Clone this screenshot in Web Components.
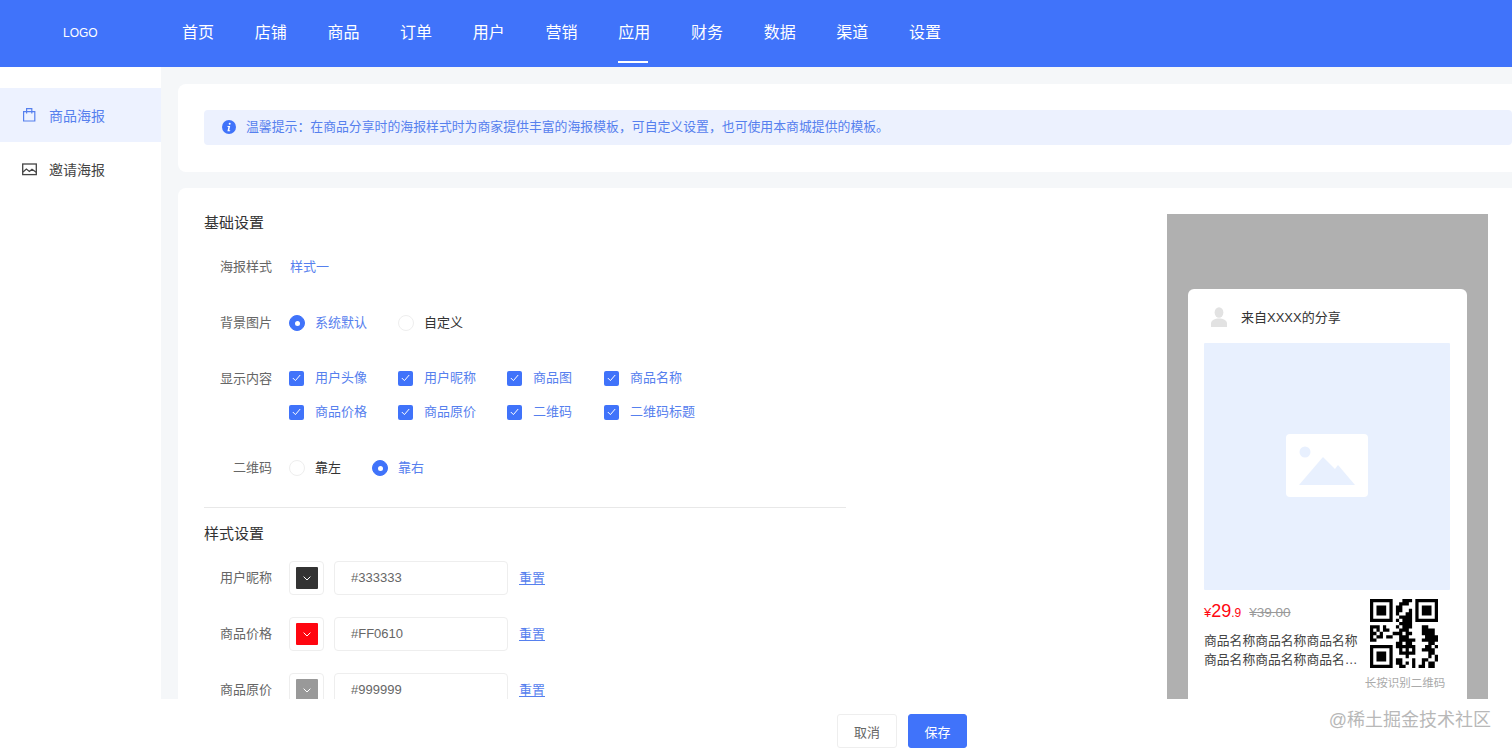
<!DOCTYPE html>
<html lang="zh-CN">
<head>
<meta charset="utf-8">
<title>商品海报</title>
<style>
    html, body {
        margin: 0;
        height: 100%;
        overflow: hidden;
    }
    body {
        font-family: "Liberation Sans", "Noto Sans CJK SC", sans-serif;
        font-size: 13px;
        color: #333;
    }
</style>
</head>
<body>
<poster-app></poster-app>

<script>
const BLUE = '#4073fa';

class AppHeader extends HTMLElement {
    connectedCallback() {
        const items = ['首页', '店铺', '商品', '订单', '用户', '营销', '应用', '财务', '数据', '渠道', '设置'];
        this.attachShadow({ mode: 'open' });
        this.shadowRoot.innerHTML = `
            <style>
                :host {
                    display: flex;
                    flex: none;
                    align-items: stretch;
                    height: 67px;
                    padding-left: 63px;
                    background: ${BLUE};
                    color: #fff;
                }
                .logo {
                    width: 119px;
                    font-size: 12px;
                    line-height: 66px;
                }
                nav {
                    display: flex;
                    gap: 40.7px;
                }
                a {
                    position: relative;
                    font-size: 16px;
                    line-height: 65px;
                    color: #fff;
                    text-decoration: none;
                }
                a.active::after {
                    content: '';
                    position: absolute;
                    left: 0;
                    right: 2px;
                    bottom: 4px;
                    height: 2px;
                    background: #fff;
                }
            </style>
            <div class="logo">LOGO</div>
            <nav>
                ${items.map(t => `<a href="#" class="${t === '应用' ? 'active' : ''}">${t}</a>`).join('')}
            </nav>
        `;
    }
}

class SideItem extends HTMLElement {
    connectedCallback() {
        const active = this.hasAttribute('active');
        const bag = `<svg width="14" height="14" viewBox="0 0 14 14" fill="none" stroke="currentColor" stroke-width="1.2">
                <path d="M1.600 3.600h11.200v9.400H1.600z"/><path d="M4.600 5.600V.7h5.200v4.900"/></svg>`;
        const pic = `<svg width="15" height="13" viewBox="0 0 15 13" fill="none" stroke="currentColor" stroke-width="1.3">
                <rect x=".7" y="1" width="13.600" height="10.600"/><path d="M1 9l3.400-3 3 2.400 2.600-2.200 4.200 3"/></svg>`;
        this.attachShadow({ mode: 'open' });
        this.shadowRoot.innerHTML = `
            <style>
                :host {
                    display: flex;
                    align-items: center;
                    height: 54px;
                    padding-left: 22px;
                    font-size: 14px;
                    color: ${active ? '#5680ee' : '#444'};
                    background: ${active ? '#edf2ff' : 'transparent'};
                }
                .icon {
                    display: flex;
                    width: 27px;
                }
            </style>
            <span class="icon">${this.getAttribute('icon') === 'bag' ? bag : pic}</span>
            <slot></slot>
        `;
    }
}

class AppSidebar extends HTMLElement {
    connectedCallback() {
        this.attachShadow({ mode: 'open' });
        this.shadowRoot.innerHTML = `
            <style>
                :host {
                    display: block;
                    flex: none;
                    width: 161px;
                    padding-top: 21px;
                    box-sizing: border-box;
                    background: #fff;
                }
            </style>
            <slot></slot>
        `;
    }
}

class NoticeBar extends HTMLElement {
    connectedCallback() {
        this.attachShadow({ mode: 'open' });
        this.shadowRoot.innerHTML = `
            <style>
                :host {
                    display: flex;
                    align-items: center;
                    gap: 10px;
                    height: 35px;
                    box-sizing: border-box;
                    padding: 0 0 1px 18px;
                    border-radius: 4px;
                    background: #ecf1fe;
                    color: #5680ee;
                    font-size: 12.86px;
                    line-height: 20px;
                }
                span {
                    margin-top: -1px;
                }
                svg {
                    flex: none;
                }
            </style>
            <svg width="14" height="14" viewBox="0 0 14 14">
                <circle cx="7" cy="7" r="7" fill="${BLUE}"/>
                <circle cx="7.700" cy="3.700" r="1" fill="#fff"/>
                <path d="M5.600 6h2.600l-1 4.300h1.100l-.3.900H5.400l1-4.300h-1z" fill="#fff"/>
            </svg>
            <span><slot></slot></span>
        `;
    }
}

class SectionTitle extends HTMLElement {
    connectedCallback() {
        this.attachShadow({ mode: 'open' });
        this.shadowRoot.innerHTML = `
            <style>
                :host {
                    display: block;
                    font-size: 15px;
                    line-height: 18px;
                    color: #333;
                    margin-bottom: 18px;
                }
            </style>
            <slot></slot>
        `;
    }
}

class FormRow extends HTMLElement {
    connectedCallback() {
        this.attachShadow({ mode: 'open' });
        this.shadowRoot.innerHTML = `
            <style>
                :host {
                    display: flex;
                    align-items: flex-start;
                    gap: 17px;
                    margin-bottom: 22px;
                }
                .label {
                    flex: none;
                    width: 68px;
                    text-align: right;
                    line-height: 34px;
                    color: #666;
                }
                .value {
                    display: flex;
                    align-items: center;
                    min-height: 34px;
                    gap: 31px;
                    line-height: 20px;
                }
            </style>
            <div class="label">${this.getAttribute('label')}</div>
            <div class="value"><slot></slot></div>
        `;
    }
}

class RadioItem extends HTMLElement {
    connectedCallback() {
        const on = this.hasAttribute('checked');
        this.attachShadow({ mode: 'open' });
        this.shadowRoot.innerHTML = `
            <style>
                :host {
                    display: inline-flex;
                    align-items: center;
                    gap: 10px;
                    color: ${on ? '#5680ee' : '#333'};
                }
                i {
                    display: flex;
                    align-items: center;
                    justify-content: center;
                    width: 16px;
                    height: 16px;
                    box-sizing: border-box;
                    border-radius: 50%;
                    border: 1px solid ${on ? BLUE : '#eee'};
                    background: ${on ? BLUE : '#fff'};
                }
                i::after {
                    content: '';
                    width: 5px;
                    height: 5px;
                    border-radius: 50%;
                    background: ${on ? '#fff' : 'transparent'};
                }
            </style>
            <i></i><slot></slot>
        `;
    }
}

class CheckItem extends HTMLElement {
    connectedCallback() {
        this.attachShadow({ mode: 'open' });
        this.shadowRoot.innerHTML = `
            <style>
                :host {
                    display: inline-flex;
                    align-items: center;
                    gap: 11px;
                    height: 34px;
                    color: #5680ee;
                }
                i {
                    display: flex;
                    align-items: center;
                    justify-content: center;
                    width: 15px;
                    height: 15px;
                    border-radius: 2px;
                    background: ${BLUE};
                }
            </style>
            <i><svg width="9" height="8" viewBox="0 0 9 8" fill="none" stroke="#fff" stroke-width="1"><path d="M.8 4l2.600 2.600L8.200 1"/></svg></i>
            <slot></slot>
        `;
    }
}

class CheckGrid extends HTMLElement {
    connectedCallback() {
        this.attachShadow({ mode: 'open' });
        this.shadowRoot.innerHTML = `
            <style>
                :host {
                    display: grid;
                    grid-template-columns: auto auto 66px auto;
                    column-gap: 31px;
                    margin-top: -1px;
                }
            </style>
            <slot></slot>
        `;
    }
}

class ColorField extends HTMLElement {
    connectedCallback() {
        const color = this.getAttribute('color');
        this.attachShadow({ mode: 'open' });
        this.shadowRoot.innerHTML = `
            <style>
                :host {
                    display: flex;
                    align-items: center;
                }
                .swatch {
                    display: flex;
                    align-items: center;
                    justify-content: center;
                    width: 35px;
                    height: 34px;
                    box-sizing: border-box;
                    border: 1px solid #eee;
                    border-radius: 4px;
                }
                .swatch span {
                    display: flex;
                    align-items: center;
                    justify-content: center;
                    width: 22px;
                    height: 22px;
                    background: ${color};
                    border-radius: 1px;
                }
                .input {
                    width: 174px;
                    height: 34px;
                    box-sizing: border-box;
                    margin-left: 10px;
                    padding-left: 16px;
                    line-height: 32px;
                    border: 1px solid #eee;
                    border-radius: 4px;
                    color: #666;
                }
                a {
                    margin: 2px 0 0 11px;
                    color: #5680ee;
                }
            </style>
            <div class="swatch"><span>
                <svg width="8" height="5" viewBox="0 0 8 5" fill="none" stroke="#fff" stroke-width="1"><path d="M.6.6L4 4l3.400-3.400"/></svg>
            </span></div>
            <div class="input">${color.toUpperCase()}</div>
            <a href="#">重置</a>
        `;
    }
}

class QrCode extends HTMLElement {
    connectedCallback() {
        const rows = [
            '111111100011101111111',
            '100000100111001000001',
            '101110101100001011101',
            '101110101100101011101',
            '101110101001101011101',
            '100000100111101000001',
            '111111101011101111111',
            '000000000111100000000',
            '111010001011100011000',
            '101011000111000011110',
            '110100011101100011110',
            '101101100111000001111',
            '110000000111110011111',
            '000000001101100000110',
            '111111101111110001101',
            '100000100101010011110',
            '101110100111110000110',
            '101110100001000000101',
            '101110101100010011001',
            '100000101101010010110',
            '111111100110010110110'
        ];
        let d = '';
        rows.forEach((row, y) => {
            [...row].forEach((c, x) => {
                if (c === '1') d += `M${x} ${y}h1v1h-1z`;
            });
        });
        this.attachShadow({ mode: 'open' });
        this.shadowRoot.innerHTML = `
            <style>
                :host {
                    display: block;
                    width: 68px;
                    height: 69px;
                }
                svg {
                    display: block;
                }
            </style>
            <svg width="68" height="69" viewBox="0 0 21 21" preserveAspectRatio="none"><path d="${d}" fill="#000"/></svg>
        `;
    }
}

class PosterPreview extends HTMLElement {
    connectedCallback() {
        this.attachShadow({ mode: 'open' });
        this.shadowRoot.innerHTML = `
            <style>
                :host {
                    display: block;
                    flex: none;
                    width: 321px;
                    height: 560px;
                    box-sizing: border-box;
                    padding: 75px 21px 0;
                    background: #b0b0b0;
                }
                .card {
                    height: 440px;
                    box-sizing: border-box;
                    padding: 16px 17px 0 16px;
                    border-radius: 6px;
                    background: #fff;
                }
                .user {
                    display: flex;
                    align-items: center;
                    gap: 14px;
                    height: 24px;
                    padding-left: 7px;
                    margin-bottom: 14px;
                }
                .user span {
                    margin-bottom: 2px;
                }
                .pic {
                    display: flex;
                    align-items: center;
                    justify-content: center;
                    height: 247px;
                    box-sizing: border-box;
                    padding-bottom: 2px;
                    background: #e8f0fe;
                    border-radius: 1px;
                }
                .bottom {
                    display: flex;
                    margin-top: 9px;
                }
                .info {
                    flex: none;
                    width: 156px;
                }
                .price {
                    display: flex;
                    align-items: baseline;
                    height: 24px;
                    margin-bottom: 8px;
                    color: #ff0610;
                    font-size: 18px;
                    line-height: 24px;
                }
                .price .unit { font-size: 13px; }
                .price .tail { font-size: 12px; }
                .price s {
                    margin-left: 8px;
                    color: #999;
                    font-size: 13.5px;
                }
                .name {
                    display: -webkit-box;
                    -webkit-box-orient: vertical;
                    -webkit-line-clamp: 2;
                    overflow: hidden;
                    line-height: 19px;
                    font-size: 12.8px;
                    color: #444;
                }
                .code {
                    display: flex;
                    flex-direction: column;
                    align-items: center;
                    width: 80px;
                    margin-left: 5px;
                }
                .code qr-code {
                    margin-left: -2px;
                }
                .code span {
                    margin-top: 7px;
                    font-size: 11.5px;
                    line-height: 16px;
                    white-space: nowrap;
                    color: #aaa;
                }
            </style>
            <div class="card">
                <div class="user">
                    <svg width="16" height="20" viewBox="0 0 16 20" fill="#e2e2e2">
                        <ellipse cx="8" cy="5.500" rx="4.400" ry="5.200"/>
                        <path d="M0 20v-3.500C0 13 4 11.400 8 11.400s8 1.600 8 5.100V20z"/>
                    </svg>
                    <span>来自XXXX的分享</span>
                </div>
                <div class="pic">
                    <svg width="82" height="63" viewBox="0 0 82 63">
                        <rect width="82" height="63" rx="4" fill="#fff"/>
                        <circle cx="19" cy="18" r="5.500" fill="#e8f0fe"/>
                        <path d="M13 51l24-28 12 12 3-4 17 20z" fill="#e8f0fe"/>
                    </svg>
                </div>
                <div class="bottom">
                    <div class="info">
                        <div class="price"><span><span class="unit">¥</span>29<span class="tail">.9</span></span><s>¥39.00</s></div>
                        <div class="name">商品名称商品名称商品名称商品名称商品名称商品名称商品名称</div>
                    </div>
                    <div class="code">
                        <qr-code></qr-code>
                        <span>长按识别二维码</span>
                    </div>
                </div>
            </div>
        `;
    }
}

class FooterBar extends HTMLElement {
    connectedCallback() {
        this.attachShadow({ mode: 'open' });
        this.shadowRoot.innerHTML = `
            <style>
                :host {
                    display: flex;
                    flex: none;
                    gap: 11px;
                    height: 52px;
                    box-sizing: border-box;
                    padding: 15px 0 0 837px;
                    background: #fff;
                }
                button {
                    width: 60px;
                    height: 34px;
                    padding: 0;
                    border: 1px solid #eee;
                    border-radius: 3px;
                    background: #fff;
                    color: #666;
                    font: inherit;
                }
                button.primary {
                    width: 59px;
                    border-color: ${BLUE};
                    background: ${BLUE};
                    color: #fff;
                }
                .mark {
                    position: absolute;
                    right: 21px;
                    bottom: 19px;
                    font-size: 18px;
                    line-height: 24px;
                    color: #b8b8b8;
                }
            </style>
            <button>取消</button>
            <button class="primary">保存</button>
            <div class="mark">@稀土掘金技术社区</div>
        `;
    }
}

class PosterApp extends HTMLElement {
    connectedCallback() {
        this.attachShadow({ mode: 'open' });
        this.shadowRoot.innerHTML = `
            <style>
                :host {
                    display: flex;
                    flex-direction: column;
                    position: relative;
                    height: 100vh;
                    overflow: hidden;
                }
                .middle {
                    display: flex;
                    flex: 1;
                    min-height: 0;
                }
                main {
                    flex: 1;
                    min-width: 0;
                    overflow: hidden;
                    padding: 17px 0 0 17px;
                    background: #f5f7f9;
                }
                .card {
                    width: 1360px;
                    box-sizing: border-box;
                    padding: 26px 26px 27px;
                    border-radius: 8px;
                    background: #fff;
                }
                .card + .card {
                    display: flex;
                    margin-top: 16px;
                }
                .form {
                    flex: none;
                    width: 642px;
                    margin-right: 321px;
                }
                hr {
                    height: 1px;
                    margin: 0 0 17px;
                    border: 0;
                    background: #e8e8e8;
                }
                .plain {
                    margin-left: 1px;
                    color: #5680ee;
                }
            </style>
            <app-header></app-header>
            <div class="middle">
                <app-sidebar>
                    <side-item icon="bag" active>商品海报</side-item>
                    <side-item icon="pic">邀请海报</side-item>
                </app-sidebar>
                <main>
                    <div class="card">
                        <notice-bar>温馨提示：在商品分享时的海报样式时为商家提供丰富的海报模板，可自定义设置，也可使用本商城提供的模板。</notice-bar>
                    </div>
                    <div class="card">
                        <div class="form">
                            <section-title>基础设置</section-title>
                            <form-row label="海报样式"><span class="plain">样式一</span></form-row>
                            <form-row label="背景图片">
                                <radio-item checked>系统默认</radio-item>
                                <radio-item>自定义</radio-item>
                            </form-row>
                            <form-row label="显示内容">
                                <check-grid>
                                    <check-item>用户头像</check-item>
                                    <check-item>用户昵称</check-item>
                                    <check-item>商品图</check-item>
                                    <check-item>商品名称</check-item>
                                    <check-item>商品价格</check-item>
                                    <check-item>商品原价</check-item>
                                    <check-item>二维码</check-item>
                                    <check-item>二维码标题</check-item>
                                </check-grid>
                            </form-row>
                            <form-row label="二维码">
                                <radio-item>靠左</radio-item>
                                <radio-item checked>靠右</radio-item>
                            </form-row>
                            <hr>
                            <section-title>样式设置</section-title>
                            <form-row label="用户昵称"><color-field color="#333333"></color-field></form-row>
                            <form-row label="商品价格"><color-field color="#ff0610"></color-field></form-row>
                            <form-row label="商品原价"><color-field color="#999999"></color-field></form-row>
                        </div>
                        <poster-preview></poster-preview>
                    </div>
                </main>
            </div>
            <footer-bar></footer-bar>
        `;
    }
}

customElements.define('app-header', AppHeader);
customElements.define('side-item', SideItem);
customElements.define('app-sidebar', AppSidebar);
customElements.define('notice-bar', NoticeBar);
customElements.define('section-title', SectionTitle);
customElements.define('form-row', FormRow);
customElements.define('radio-item', RadioItem);
customElements.define('check-item', CheckItem);
customElements.define('check-grid', CheckGrid);
customElements.define('color-field', ColorField);
customElements.define('qr-code', QrCode);
customElements.define('poster-preview', PosterPreview);
customElements.define('footer-bar', FooterBar);
customElements.define('poster-app', PosterApp);
</script>
</body>
</html>
